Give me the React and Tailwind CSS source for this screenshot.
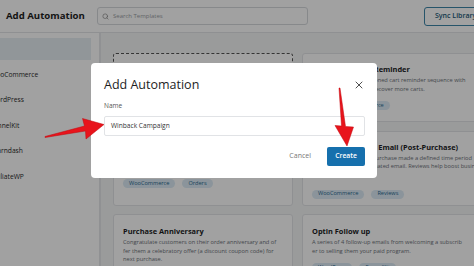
import React from "react";
import { Search, X } from "lucide-react";

function Tag({ children }) {
  return (
    <span className="inline-flex h-[9px] items-center whitespace-nowrap rounded-full bg-[#dcebf5] px-[6px] text-[5.6px] leading-none text-[#2a6a92]">
      {children}
    </span>
  );
}

function Card({ title, lines, tags, className = "", tagGap = "mt-[8px]" }) {
  return (
    <div className={"rounded-[3px] border border-[#e3e5e8] bg-white pl-[9px] pt-[10px] " + className}>
      <div className="whitespace-nowrap text-[7.4px] font-bold leading-[10px] text-[#1d1d1f]">{title}</div>
      <div className="mt-[2px] text-[5.7px] leading-[8.7px] text-[#6b7078]">
        {lines.map((l, i) => (
          <div key={i} className="whitespace-nowrap">{l}</div>
        ))}
      </div>
      {tags && (
        <div className={tagGap + " flex gap-[7px]"}>
          {tags.map((t) => (
            <Tag key={t}>{t}</Tag>
          ))}
        </div>
      )}
    </div>
  );
}

export default function App() {
  const side = ["WooCommerce", "WordPress", "FunnelKit", "Learndash", "AffiliateWP"];
  return (
    <div className="relative h-[266px] w-[474px] overflow-hidden bg-[#f4f5f6] font-['Open_Sans',sans-serif]">
      {/* header */}
      <div className="flex h-[33px] items-center border-b border-[#e2e4e7] bg-white">
        <div className="w-[97px] shrink-0 pl-[6px] text-[9.6px] font-bold text-[#1e1e1e]">Add Automation</div>
        <div className="flex h-[18px] w-[211px] shrink-0 items-center gap-[4px] rounded-[3px] border border-[#d6d9dd] bg-white pl-[4px]">
          <Search size={7} strokeWidth={2} className="text-[#777]" />
          <span className="text-[6px] text-[#9a9ea4]">Search Templates</span>
        </div>
        <div className="ml-auto mr-[-14px] flex h-[19px] w-[64px] shrink-0 items-center rounded-[3px] border-[1.5px] border-[#3d86a9] bg-white pl-[10px] text-[7px] font-semibold text-[#1a5877]">
          <span className="whitespace-nowrap">Sync Library</span>
        </div>
      </div>
      {/* body */}
      <div className="flex">
        <div className="h-[233px] w-[101px] shrink-0 border-r-[2px] border-[#e4e6e9] bg-white pt-[5px]">
          <div className="h-[22px] w-[91px] bg-[#e6eef3]" />
          <div className="mt-[2px] flex flex-col">
            {side.map((s) => (
              <div key={s} className="flex h-[25.5px] items-center">
                <span className="ml-[-10px] whitespace-nowrap text-[6.7px] text-[#2a2a2a]">{s}</span>
              </div>
            ))}
          </div>
        </div>
        <div className="grid shrink-0 grid-cols-[180px_180px] grid-rows-[69px_75px_80px] gap-x-[9px] gap-y-[8.5px] pl-[12px] pt-[20px]">
          <div className="rounded-[3px] border border-dashed border-[#555] bg-white" />
          <Card
            title="Abandoned Cart Reminder"
            lines={["Send automated abandoned cart reminder sequence with", "personalized emails to recover more carts."]}
            tags={["All", "WooCommerce"]}
          />
          <Card
            title="Winback Customers"
            lines={["Re-engage customers who haven't purchased in a", "while with a special offer."]}
            tags={["WooCommerce", "Orders"]}
          />
          <Card
            title="Customer Review Email (Post-Purchase)"
            lines={[
              "Ask customers, after a purchase made a defined time period",
              "has passed via an automated email. Reviews help boost business",
              "and trust.",
            ]}
            tags={["WooCommerce", "Reviews"]}
            tagGap="mt-[10px]"
          />
          <Card
            className="pt-[11px]"
            title="Purchase Anniversary"
            lines={[
              "Congratulate customers on their order anniversary and of",
              "fer them a celebratory offer (a discount coupon code) for",
              "next purchase.",
            ]}
          />
          <Card
            className="pt-[11px]"
            title="Optin Follow up"
            lines={["A series of 4 follow-up emails from welcoming a subscrib", "er to selling them your paid program."]}
            tags={["WordPress", "FunnelKit"]}
          />
        </div>
      </div>

      {/* overlay */}
      <div className="absolute inset-0 bg-black/[0.37]" />

      {/* modal */}
      <div className="absolute left-[91px] top-[63px] h-[115px] w-[286px] rounded-[4px] bg-white pl-[13px] pr-[12px] pt-[14px]">
        <div className="flex items-center justify-between">
          <div className="text-[12.5px] leading-[16px] text-[#1e1e1e]">Add Automation</div>
          <X size={12} strokeWidth={1.6} className="text-[#222]" />
        </div>
        <div className="mt-[7.5px] text-[6.5px] leading-[9px] text-[#555]">Name</div>
        <div className="mt-[6.5px] flex h-[20px] w-[261px] items-center rounded-[2px] border border-[#e1e3e6] pl-[6px] text-[6.6px] text-[#333]">
          Winback Campaign
        </div>
        <div className="mt-[11px] flex items-center justify-end gap-[16px]">
          <span className="text-[7px] text-[#777]">Cancel</span>
          <div className="flex h-[19px] w-[38px] items-center justify-center rounded-[2px] bg-[#1670ad] text-[6.8px] font-semibold text-white">
            Create
          </div>
        </div>
      </div>

      {/* arrows */}
      <svg className="pointer-events-none absolute inset-0" width="474" height="266" viewBox="0 0 474 266">
        <polygon
          points="45,137.5 85.5,131 86,139 104,124.5 82.5,118.5 84.5,126 45,136.5"
          fill="#e8141c"
          stroke="#c0060d"
          strokeWidth="0.5"
          strokeLinejoin="round"
        />
        <polygon
          points="339,88 341.5,126 335,125.5 347,146 353.5,127 345.5,126.5 340,88"
          fill="#e8141c"
          stroke="#c0060d"
          strokeWidth="0.5"
          strokeLinejoin="round"
        />
      </svg>
    </div>
  );
}
